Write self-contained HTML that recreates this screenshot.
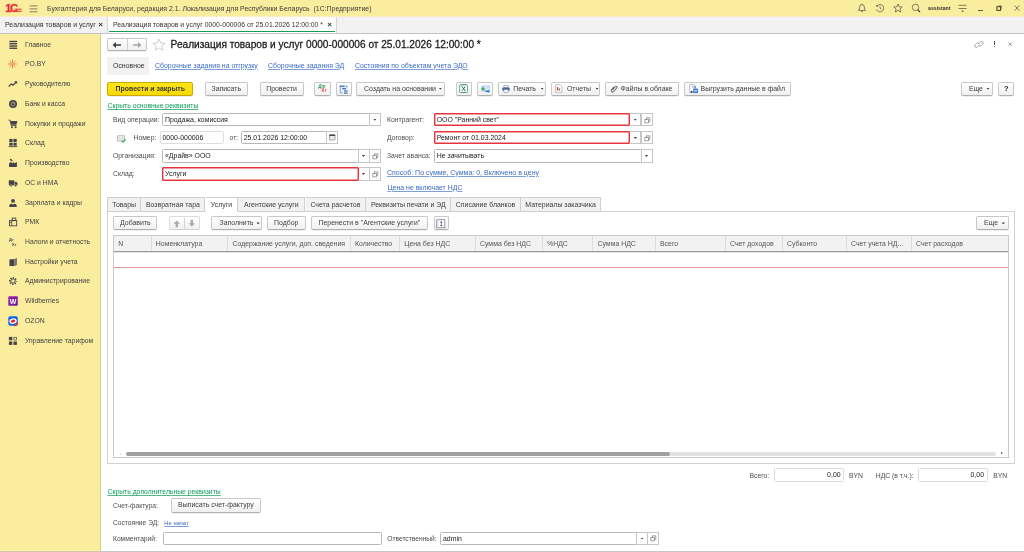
<!DOCTYPE html>
<html lang="ru"><head><meta charset="utf-8"><title>Реализация товаров и услуг</title>
<style>
html,body{margin:0;padding:0}
body{width:1024px;height:552px;overflow:hidden;background:#fff;position:relative;font-family:"Liberation Sans",sans-serif;font-size:6.93px;color:#3c3c3c;line-height:1}
.a{position:absolute;white-space:nowrap}
.t{position:absolute;white-space:nowrap;line-height:8px;height:8px}
.btn{color:#404040;position:absolute;box-sizing:border-box;border:1px solid #c8c8c8;border-bottom-color:#b0b0b0;border-radius:2px;background:linear-gradient(#ffffff,#f0f0f0);height:13.8px;line-height:12px;text-align:center;white-space:nowrap;box-shadow:0 .5px .5px rgba(0,0,0,.12)}
.fld{position:absolute;box-sizing:border-box;border:1px solid #b8b8b8;border-radius:1.5px;background:#fff;height:13.4px;line-height:11.2px;padding-left:2px;white-space:nowrap;color:#222}
.red{border-radius:1px;border-color:#e6363c;box-shadow:inset 0 0 0 .45px #e6363c}
.sb{position:absolute;box-sizing:border-box;border:1px solid #c6c6c6;background:#fff;height:13.4px}
a{color:#3468c0;text-decoration:underline}
.lnk{color:#3a6cc4;text-decoration:underline;text-decoration-color:rgba(58,108,196,.65)}
.glnk{color:#109a5a;text-decoration:underline;text-decoration-color:rgba(16,154,90,.7);font-size:6.82px}
.lbl{color:#4d4d4d;font-size:6.8px}
.side .t{left:25px;color:#424242;font-size:6.82px}
.th{position:absolute;top:0;height:15px;border-left:1px solid #dcdcdc;box-sizing:border-box;padding-left:4px;line-height:15.6px;color:#555}
.tab{position:absolute;top:197px;height:15px;box-sizing:border-box;border:1px solid #cfcfcf;border-left:none;background:#f2f2f2;line-height:13.4px;text-align:center;color:#3c3c3c}
.dd{display:inline-block;width:3.3px;height:2px;background:#444;clip-path:polygon(0 0,100% 0,50% 100%);vertical-align:.9px;margin-left:2.6px}
.dd.c{position:absolute;left:50%;top:50%;margin:-.9px 0 0 -1.65px}
</style></head><body><div id="root" style="position:absolute;left:0;top:0;width:1024px;height:552px;will-change:transform">

<!-- top bar -->
<div class="a" style="left:0;top:0;width:1024px;height:16px;background:#fbed9e;border-bottom:1px solid #f7efc6"></div>
<div class="a" style="left:0;top:17px;width:1024px;height:16.7px;background:#f2f2f2;border-bottom:1px solid #c4c4c4;box-sizing:border-box"></div>
<div class="t" style="left:47px;top:4.5px;color:#3c3c3c">Бухгалтерия для Беларуси, редакция 2.1. Локализация для Республики Беларусь&nbsp; (1С:Предприятие)</div>
<div class="t" style="left:928px;top:4.3px;font-size:5.2px;font-weight:bold;color:#333">assistant</div>

<!-- top icons -->
<svg class="a" style="left:5px;top:3px" width="19" height="11" viewBox="0 0 19 11"><text x="0.3" y="9" font-family="Liberation Sans, sans-serif" font-size="11.2" font-weight="bold" fill="#e7323c" stroke="#e7323c" stroke-width=".35">1</text><text x="5.1" y="9" font-family="Liberation Sans, sans-serif" font-size="11.2" font-weight="bold" fill="#e7323c" stroke="#e7323c" stroke-width=".35">С</text><path d="M9.5 6.15H16.8M10.5 8.3H16.8" stroke="#e7323c" stroke-width=".95"/></svg>
<svg class="a" style="left:28.5px;top:4.5px" width="9" height="8" viewBox="0 0 9 8"><path d="M0.6 0.9H8.4M0.6 3.9H8.4M0.6 6.8H8.4" stroke="#77735f" stroke-width=".9"/></svg>
<svg class="a" style="left:856.5px;top:3px" width="10" height="10" viewBox="0 0 10 10"><path d="M1.4 7.4Q2.6 6.4 2.6 4.2Q2.6 1.6 5 1.6Q7.4 1.6 7.4 4.2Q7.4 6.4 8.6 7.4Z" fill="none" stroke="#505050" stroke-width=".72" stroke-linejoin="round"/><path d="M4.2 8.6H5.8" stroke="#505050" stroke-width=".8"/><path d="M5 0.7V1.6" stroke="#505050" stroke-width=".72"/></svg>
<svg class="a" style="left:875px;top:3px" width="10" height="10" viewBox="0 0 10 10"><path d="M1.9 3.2A3.7 3.7 0 1 1 1.5 6.3" fill="none" stroke="#505050" stroke-width=".72"/><path d="M0.7 2.2L2.1 3.9L3.4 2.4Z" fill="#4a4a4a"/><path d="M5 2.8V5.2L6.6 6.3" fill="none" stroke="#505050" stroke-width=".72"/></svg>
<svg class="a" style="left:893px;top:3px" width="10" height="10" viewBox="0 0 10 10"><path d="M5 1L6.2 3.8L9.2 4L6.9 6L7.6 9L5 7.4L2.4 9L3.1 6L0.8 4L3.8 3.8Z" fill="none" stroke="#505050" stroke-width=".72" stroke-linejoin="round"/></svg>
<svg class="a" style="left:911px;top:3px" width="10" height="10" viewBox="0 0 10 10"><circle cx="4.5" cy="4.4" r="3.2" fill="none" stroke="#505050" stroke-width=".72"/><path d="M6.8 6.8L9 9" stroke="#333" stroke-width="1.1"/></svg>
<svg class="a" style="left:957.5px;top:4px" width="9" height="9" viewBox="0 0 9 9"><path d="M0.6 1.3H8.5M0.6 4.5H8.5" stroke="#605c48" stroke-width=".8"/><path d="M3.2 6.7H6L4.6 7.9Z" fill="#3a3528"/></svg>
<div class="a" style="left:978px;top:9.8px;width:5px;height:.8px;background:#605c48"></div>
<svg class="a" style="left:995.8px;top:5px" width="6" height="6" viewBox="0 0 6 6"><rect x="0.9" y="1.7" width="3.7" height="3.7" fill="none" stroke="#45402e" stroke-width="1"/><path d="M2.4 1.4V0.9H5.3V3.6H4.8" fill="none" stroke="#45402e" stroke-width=".6"/></svg>
<svg class="a" style="left:1013.6px;top:5px" width="6" height="6" viewBox="0 0 6 6"><path d="M0.6 0.4L5.3 5.7M5.3 0.4L0.6 5.7" stroke="#605c48" stroke-width=".75"/></svg>
<!-- content header right icons -->
<svg class="a" style="left:973.5px;top:39.5px" width="10" height="9" viewBox="0 0 10 9"><g fill="none" stroke="#8a8a8a" stroke-width=".75" stroke-linecap="round"><path d="M4.6 5.6L3.5 6.9A1.55 1.55 0 0 1 1.2 4.8L2.6 3.3A1.55 1.55 0 0 1 4.9 3.4"/><path d="M5.2 3.3L6.3 2A1.55 1.55 0 0 1 8.7 4.1L7.3 5.6A1.55 1.55 0 0 1 5 5.5"/></g></svg>
<div class="a" style="left:993.6px;top:41px;width:1px;height:3.6px;background:#555"></div>
<div class="a" style="left:993.6px;top:45.6px;width:1px;height:1.1px;background:#555"></div>
<svg class="a" style="left:1008px;top:42px" width="4.4" height="4.4" viewBox="0 0 5 5"><path d="M0.6 0.6L4.4 4.4M4.4 0.6L0.6 4.4" stroke="#777" stroke-width=".9"/></svg>

<!-- window tabs -->
<div class="t" style="left:5px;top:21px;color:#333">Реализация товаров и услуг</div>
<div class="t" style="left:98.2px;top:20.6px;color:#333;font-weight:bold;font-size:8px">×</div>
<div class="a" style="left:106.5px;top:17px;width:230.5px;height:16px;background:#fff;border-left:1px solid #d5d5d5;border-right:1px solid #d5d5d5;box-sizing:border-box"></div>
<div class="a" style="left:109px;top:30.7px;width:226px;height:1.3px;background:#169d53"></div>
<div class="t" style="left:113px;top:21px;color:#333;font-size:6.85px">Реализация товаров и услуг 0000-000006 от 25.01.2026 12:00:00 *</div>
<div class="t" style="left:327.2px;top:20.6px;color:#333;font-weight:bold;font-size:8px">×</div>

<!-- sidebar -->
<div class="a side" style="left:0;top:34.2px;width:100.5px;height:518.5px;background:#fbed9e;border-right:1px solid #d9cd85;box-sizing:border-box">
<div class="t" style="top:6.50px">Главное</div>
<svg class="a ic" id="si0" style="left:8px;top:5.50px" width="10" height="10" viewBox="0 0 10 10"><g fill="#45434b"><rect x="1.4" y="0.8" width="7.7" height="1.4"/><rect x="1.4" y="3.05" width="7.7" height="1.4"/><rect x="1.4" y="5.3" width="7.7" height="1.4"/><rect x="1.4" y="7.55" width="7.7" height="1.4"/></g></svg>
<div class="t" style="top:26.23px">PO.BY</div>
<svg class="a ic" id="si1" style="left:8px;top:25.23px" width="10" height="10" viewBox="0 0 10 10"><g stroke="#de3d32" stroke-width=".62" stroke-linecap="round"><path d="M4.4 0.9V9.1M0.4 5H8.4M1.6 2.2L7.2 7.8M7.2 2.2L1.6 7.8"/></g><circle cx="4.4" cy="5" r="1" fill="#fbed9e"/><circle cx="4.4" cy="5" r=".55" fill="#de3d32"/></svg>
<div class="t" style="top:45.96px">Руководителю</div>
<svg class="a ic" id="si2" style="left:8px;top:44.96px" width="10" height="10" viewBox="0 0 10 10"><path d="M1 7.2L3.3 4.9L5 6.2L8 3.2" fill="none" stroke="#45434b" stroke-width="1.25" stroke-linejoin="round" stroke-linecap="round"/><path d="M6.2 2.2H9.1V5.1Z" fill="#45434b"/></svg>
<div class="t" style="top:65.69px">Банк и касса</div>
<svg class="a ic" id="si3" style="left:8px;top:64.69px" width="10" height="10" viewBox="0 0 10 10"><circle cx="5" cy="5" r="4" fill="#45434b"/><circle cx="5" cy="5" r="2" fill="none" stroke="#cfc48a" stroke-width=".65"/><path d="M5 5L6.5 3.5" stroke="#cfc48a" stroke-width=".65"/></svg>
<div class="t" style="top:85.42px">Покупки и продажи</div>
<svg class="a ic" id="si4" style="left:8px;top:84.42px" width="10" height="10" viewBox="0 0 10 10"><path d="M0.6 1.2H2.1L3.2 6.6H8.4" fill="none" stroke="#45434b" stroke-width=".9"/><path d="M2.5 2H9.4L8.4 5.8H3.3Z" fill="#45434b"/><circle cx="3.9" cy="8.2" r=".95" fill="#45434b"/><circle cx="7.7" cy="8.2" r=".95" fill="#45434b"/></svg>
<div class="t" style="top:105.15px">Склад</div>
<svg class="a ic" id="si5" style="left:8px;top:104.15px" width="10" height="10" viewBox="0 0 10 10"><g fill="#45434b"><rect x="1.3" y="0.9" width="3.3" height="3.2"/><rect x="5.4" y="0.9" width="3.3" height="3.2"/><rect x="1.3" y="4.8" width="3.3" height="2.9"/><rect x="5.4" y="4.8" width="3.3" height="2.9"/><rect x="0.7" y="8.2" width="8.6" height=".9"/></g></svg>
<div class="t" style="top:124.88px">Производство</div>
<svg class="a ic" id="si6" style="left:8px;top:123.88px" width="10" height="10" viewBox="0 0 10 10"><path d="M1.1 9V5.2L3.6 3.6V5.6L6.2 4V5.6L8.9 4V9Z" fill="#45434b"/><rect x="1.9" y="0.9" width="1.7" height="1.6" fill="#45434b"/><rect x="3.3" y="1.9" width="1.3" height="1.2" fill="#45434b"/></svg>
<div class="t" style="top:144.61px">ОС и НМА</div>
<svg class="a ic" id="si7" style="left:8px;top:143.61px" width="10" height="10" viewBox="0 0 10 10"><rect x="0.8" y="2.3" width="5.4" height="5" fill="#45434b"/><path d="M6.6 3.7H8.3L9.4 5.3V7.3H6.6Z" fill="#45434b"/><circle cx="2.9" cy="7.7" r="1.15" fill="#45434b" stroke="#fbed9e" stroke-width=".4"/><circle cx="7.6" cy="7.7" r="1.15" fill="#45434b" stroke="#fbed9e" stroke-width=".4"/></svg>
<div class="t" style="top:164.34px">Зарплата и кадры</div>
<svg class="a ic" id="si8" style="left:8px;top:163.34px" width="10" height="10" viewBox="0 0 10 10"><circle cx="5" cy="2.9" r="1.9" fill="#45434b"/><path d="M1.3 9V7.8Q1.3 5.9 3.4 5.7L5 6.6L6.6 5.7Q8.7 5.9 8.7 7.8V9Z" fill="#45434b"/></svg>
<div class="t" style="top:184.07px">РМК</div>
<svg class="a ic" id="si9" style="left:8px;top:183.07px" width="10" height="10" viewBox="0 0 10 10"><rect x="1.5" y="3.6" width="7.2" height="5.2" fill="none" stroke="#45434b" stroke-width=".9"/><rect x="4.2" y="1.1" width="3.6" height="2.5" fill="none" stroke="#45434b" stroke-width=".9"/><path d="M3.7 3.6V8.8M1.5 5.4H3.7" stroke="#45434b" stroke-width=".8"/></svg>
<div class="t" style="top:203.80px">Налоги и отчетность</div>
<svg class="a ic" id="si10" style="left:8px;top:202.80px" width="10" height="10" viewBox="0 0 10 10"><text x="0.9" y="4.2" font-family="Liberation Sans, sans-serif" font-size="3.9" font-weight="bold" fill="#45434b">Дт</text><text x="4.3" y="8.6" font-family="Liberation Sans, sans-serif" font-size="3.9" font-weight="bold" fill="#45434b">Кт</text></svg>
<div class="t" style="top:223.53px">Настройки учета</div>
<svg class="a ic" id="si11" style="left:8px;top:222.53px" width="10" height="10" viewBox="0 0 10 10"><path d="M1.4 2.4L6.6 1.9V8.9L1.4 9Z" fill="#45434b"/><path d="M7.1 1.8L8.9 0.9V7.7L7.1 8.9Z" fill="#6d6a70"/></svg>
<div class="t" style="top:243.26px">Администрирование</div>
<svg class="a ic" id="si12" style="left:8px;top:242.26px" width="10" height="10" viewBox="0 0 10 10"><circle cx="5" cy="5" r="3.25" fill="none" stroke="#45434b" stroke-width="1.5" stroke-dasharray="1.28 1.275" stroke-dashoffset=".64"/><circle cx="5" cy="5" r="2.2" fill="none" stroke="#45434b" stroke-width="1"/></svg>
<div class="t" style="top:262.99px">Wildberries</div>
<svg class="a ic" id="si13" style="left:8px;top:261.99px" width="10" height="10" viewBox="0 0 10 10"><defs><linearGradient id="wbg" x1="0" y1="0" x2="1" y2="1"><stop offset="0" stop-color="#a020a8"/><stop offset="1" stop-color="#6a1a9a"/></linearGradient></defs><rect x="0.3" y="0.3" width="9.5" height="9.5" rx="1" fill="url(#wbg)"/><text x="5.05" y="7.6" text-anchor="middle" font-family="Liberation Sans, sans-serif" font-size="7" font-weight="bold" fill="#fff">W</text></svg>
<div class="t" style="top:282.72px">OZON</div>
<svg class="a ic" id="si14" style="left:8px;top:281.72px" width="10" height="10" viewBox="0 0 10 10"><rect x="0.3" y="0.3" width="9.5" height="9.5" rx="2" fill="#1266e6"/><path d="M9.8 5.5V7.8A2 2 0 0 1 7.8 9.8H4.5Q8 9 9.8 5.5Z" fill="#e6273a"/><ellipse cx="5" cy="5.1" rx="3.7" ry="2.7" fill="#fff" transform="rotate(-12 5 5)"/><ellipse cx="5" cy="5.1" rx="2.4" ry="1.45" fill="#e6273a" transform="rotate(-12 5 5)"/></svg>
<div class="t" style="top:302.45px">Управление тарифом</div>
<svg class="a ic" id="si15" style="left:8px;top:301.45px" width="10" height="10" viewBox="0 0 10 10"><g fill="#45434b"><rect x="0.9" y="0.9" width="3.4" height="3.4"/><rect x="0.9" y="5.5" width="3.4" height="3.4"/><rect x="5.5" y="5.5" width="3.4" height="3.4"/></g><rect x="5.9" y="1.3" width="2.7" height="2.7" fill="none" stroke="#45434b" stroke-width=".7"/></svg>
</div>

<!--MAIN-->
<!-- header row -->
<div class="btn" style="left:107px;top:38px;width:39.5px;height:13px"></div>
<div class="a" style="left:127px;top:39px;width:1px;height:11px;background:#cfcfcf"></div>
<svg class="a" style="left:112px;top:41px" width="10" height="8" viewBox="0 0 10 8"><path d="M0.6 4 L4 1 V3.2 H9 V4.8 H4 V7 Z" fill="#3a3a3a"/></svg>
<svg class="a" style="left:132px;top:41px" width="10" height="8" viewBox="0 0 10 8"><path d="M9.4 4 L6 1 V3.2 H1 V4.8 H6 V7 Z" fill="#a5a5a5"/></svg>
<svg class="a" style="left:152px;top:37.5px" width="14" height="13" viewBox="0 0 14 13"><path d="M7 1 L8.7 5 L13 5.3 L9.7 8.1 L10.8 12.2 L7 9.9 L3.2 12.2 L4.3 8.1 L1 5.3 L5.3 5 Z" fill="none" stroke="#c4c4c4" stroke-width=".8" stroke-linejoin="round"/></svg>
<div class="a" style="left:170.6px;top:38.8px;font-size:10.12px;line-height:11px;color:#1c1c1c;-webkit-text-stroke:.28px #1c1c1c">Реализация товаров и услуг 0000-000006 от 25.01.2026 12:00:00 *</div>

<!-- nav tabs -->
<div class="a" style="left:107px;top:57px;width:42px;height:17.5px;background:#f2f2f2;border-radius:1.5px"></div>
<div class="t" style="left:113px;top:61.5px;color:#333">Основное</div>
<div class="t lnk" style="left:155px;top:61.5px">Сборочные задания на отгрузку</div>
<div class="t lnk" style="left:268px;top:61.5px">Сборочные задания ЭД</div>
<div class="t lnk" style="left:355px;top:61.5px">Состояния по объектам учета ЭДО</div>

<!-- command bar -->
<div class="btn" style="left:107.3px;top:81.6px;height:14.1px;line-height:12.3px;width:86px;background:linear-gradient(#ffe61a,#f7d800);border-color:#c9a800;font-weight:bold;color:#3a3a3a">Провести и закрыть</div>
<div class="btn" style="left:204.5px;top:81.6px;height:14.1px;line-height:12.3px;width:43.5px">Записать</div>
<div class="btn" style="left:259.5px;top:81.6px;height:14.1px;line-height:12.3px;width:44px">Провести</div>
<div class="btn" style="left:314.3px;top:81.6px;height:14.1px;line-height:12.3px;width:16.3px"></div>
<div class="btn" style="left:335.7px;top:81.6px;height:14.1px;line-height:12.3px;width:16.3px"></div>
<div class="btn" style="left:356.3px;top:81.6px;height:14.1px;line-height:12.3px;width:89px;text-align:left;padding-left:6.8px">Создать на основании<span class="dd" style="margin-left:2.8px"></span></div>
<div class="btn" style="left:456.3px;top:81.6px;height:14.1px;line-height:12.3px;width:16px"></div>
<div class="btn" style="left:477px;top:81.6px;height:14.1px;line-height:12.3px;width:15.7px"></div>
<div class="btn" style="left:497.5px;top:81.6px;height:14.1px;line-height:12.3px;width:48.3px;text-align:left;padding-left:14.8px">Печать <span class="dd"></span></div>
<div class="btn" style="left:551.3px;top:81.6px;height:14.1px;line-height:12.3px;width:48.3px;text-align:left;padding-left:14.7px">Отчеты <span class="dd"></span></div>
<div class="btn" style="left:605.3px;top:81.6px;height:14.1px;line-height:12.3px;width:73.7px;text-align:left;padding-left:14.3px">Файлы в облаке</div>
<div class="btn" style="left:684.3px;top:81.6px;height:14.1px;line-height:12.3px;width:106.5px;text-align:left;padding-left:15.3px">Выгрузить данные в файл</div>
<div class="btn" style="left:961.3px;top:81.6px;height:14.1px;line-height:12.3px;width:32.2px;text-align:left;padding-left:6.6px">Еще<span class="dd" style="margin-left:3.4px"></span></div>
<div class="btn" style="left:998.3px;top:81.6px;height:14.1px;line-height:12.3px;width:16.2px;font-size:7.5px;font-weight:bold;color:#222">?</div>

<!-- form -->
<div class="t glnk" style="left:107.5px;top:102px">Скрыть основные реквизиты</div>

<div class="t lbl" style="left:113px;top:115.5px">Вид операции:</div>
<div class="fld" style="left:162px;top:113px;width:207.5px">Продажа, комиссия</div>
<div class="sb" style="left:368.5px;top:113px;width:12.8px"><span class="dd c"></span></div>

<div class="t lbl" style="left:133.5px;top:133.7px">Номер:</div>
<div class="fld" style="left:159.5px;top:131.1px;width:64.5px;border-color:#dedede;border-radius:2px">0000-000006</div>
<div class="t lbl" style="left:229.5px;top:133.7px">от:</div>
<div class="fld" style="left:240.7px;top:131.1px;width:86px">25.01.2026 12:00:00</div>
<div class="sb" style="left:325.7px;top:131.1px;width:12px"></div>

<div class="t lbl" style="left:113px;top:151.8px">Организация:</div>
<div class="fld" style="left:162px;top:149.2px;width:196.5px">«Драйв» ООО</div>
<div class="sb" style="left:357.5px;top:149.2px;width:12px"><span class="dd c"></span></div>
<div class="sb" style="left:368.5px;top:149.2px;width:12.8px"></div>

<div class="t lbl" style="left:113px;top:170px">Склад:</div>
<div class="fld red" style="left:162px;top:167.3px;width:196.5px">Услуги</div>
<div class="sb" style="left:358.5px;top:167.3px;width:11px;border-left:none"><span class="dd c"></span></div>
<div class="sb" style="left:368.5px;top:167.3px;width:12.8px"></div>

<div class="t lbl" style="left:387px;top:115.5px">Контрагент:</div>
<div class="fld red" style="left:433.7px;top:113px;width:196.5px">ООО "Ранний свет"</div>
<div class="sb" style="left:630.2px;top:113px;width:11.3px;border-left:none"><span class="dd c"></span></div>
<div class="sb" style="left:640.5px;top:113px;width:12px"></div>

<div class="t lbl" style="left:387px;top:133.7px">Договор:</div>
<div class="fld red" style="left:433.7px;top:131.1px;width:196.5px">Ремонт от 01.03.2024</div>
<div class="sb" style="left:630.2px;top:131.1px;width:11.3px;border-left:none"><span class="dd c"></span></div>
<div class="sb" style="left:640.5px;top:131.1px;width:12px"></div>

<div class="t lbl" style="left:387px;top:151.8px">Зачет аванса:</div>
<div class="fld" style="left:433.7px;top:149.2px;width:208px">Не зачитывать</div>
<div class="sb" style="left:640.5px;top:149.2px;width:12px"><span class="dd c"></span></div>

<div class="t lnk" style="left:387px;top:168.8px;font-size:7px">Способ: По сумме, Сумма: 0, Включено в цену</div>
<div class="t lnk" style="left:387.5px;top:183.8px">Цена не включает НДС</div>

<!-- tab strip -->
<div class="a" style="left:107px;top:211px;width:907.8px;height:252.7px;border:1px solid #d2d2d2;box-sizing:border-box"></div>
<div class="tab" style="left:107px;width:34.3px;border-left:1px solid #cfcfcf">Товары</div>
<div class="tab" style="left:141.3px;width:64.2px">Возвратная тара</div>
<div class="tab" style="left:205.5px;width:32.8px;background:#fff;border-bottom-color:#fff">Услуги</div>
<div class="tab" style="left:238.3px;width:67.2px">Агентские услуги</div>
<div class="tab" style="left:305.5px;width:60.8px">Счета расчетов</div>
<div class="tab" style="left:366.3px;width:85px">Реквизиты печати и ЭД</div>
<div class="tab" style="left:451.3px;width:69.5px">Списание бланков</div>
<div class="tab" style="left:520.8px;width:80.5px">Материалы заказчика</div>

<!-- table toolbar -->
<div class="btn" style="left:113.3px;top:216.3px;width:44.2px;height:14.2px;line-height:12.4px">Добавить</div>
<div class="btn" style="left:168.7px;top:216.3px;width:31.8px;height:14.2px;line-height:12.4px;border-color:#dcdcdc;border-bottom-color:#d0d0d0;box-shadow:none"></div>
<div class="a" style="left:184.3px;top:217.7px;width:1px;height:11.5px;background:#d5d5d5"></div>
<div class="btn" style="left:211.3px;top:216.3px;width:50.5px;height:14.2px;line-height:12.4px;text-align:left;padding-left:7.2px">Заполнить<span class="dd" style="margin-left:3px"></span></div>
<div class="btn" style="left:267px;top:216.3px;width:38.5px;height:14.2px;line-height:12.4px">Подбор</div>
<div class="btn" style="left:310.7px;top:216.3px;width:117.3px;height:14.2px;line-height:12.4px">Перенести в "Агентские услуги"</div>
<div class="btn" style="left:433.7px;top:216.3px;width:15px;height:14.2px;line-height:12.4px"></div>
<div class="btn" style="left:976.2px;top:216.3px;width:32.5px;height:14.2px;line-height:12.4px;text-align:left;padding-left:6.8px">Еще<span class="dd" style="margin-left:3.6px"></span></div>

<!-- table -->
<div class="a" style="left:113.3px;top:235px;width:895.4px;height:223.4px;border:1px solid #c9c9c9;box-sizing:border-box;background:#fff"></div>
<div class="a" style="left:114.3px;top:236px;width:893.4px;height:16px;background:#f2f2f2;border-bottom:1px solid #9c9c9c;box-shadow:0 .5px 0 #c8c8c8;box-sizing:border-box">
<div class="th" style="left:0;border-left:none">N</div>
<div class="th" style="left:36.5px">Номенклатура</div>
<div class="th" style="left:113.2px">Содержание услуги, доп. сведения</div>
<div class="th" style="left:235.7px">Количество</div>
<div class="th" style="left:285px">Цена без НДС</div>
<div class="th" style="left:360.7px">Сумма без НДС</div>
<div class="th" style="left:427.7px">%НДС</div>
<div class="th" style="left:478.2px">Сумма НДС</div>
<div class="th" style="left:540.7px">Всего</div>
<div class="th" style="left:610.7px">Счет доходов</div>
<div class="th" style="left:667.7px">Субконто</div>
<div class="th" style="left:731.7px">Счет учета НД...</div>
<div class="th" style="left:796.7px">Счет расходов</div>
</div>
<div class="a" style="left:114.3px;top:267px;width:893.4px;height:1px;background:#e59a9a"></div>
<!-- scrollbar -->
<div class="a" style="left:126.3px;top:451.8px;width:869.3px;height:4.5px;border-radius:2.3px;background:#e2e2e2"></div>
<div class="a" style="left:126.3px;top:451.8px;width:543.5px;height:4.5px;border-radius:2.3px;background:#a0a0a0"></div>
<div class="a" style="left:119.5px;top:453px;width:0;height:0;border:1.2px solid transparent;border-right-color:#bbb;border-left:none"></div>
<div class="a" style="left:1001px;top:452.4px;width:0;height:0;border:1.7px solid transparent;border-left:2px solid #444;border-right:none"></div>

<!-- totals -->
<div class="t lbl" style="left:749.5px;top:471.6px">Всего:</div>
<div class="fld" style="left:773.6px;top:468.1px;height:13.7px;line-height:12px;width:70.5px;border-color:#dcdcdc;text-align:right;padding-right:2.5px">0,00</div>
<div class="t lbl" style="left:849px;top:471.6px">BYN</div>
<div class="t lbl" style="left:875.8px;top:471.6px">НДС (в т.ч.):</div>
<div class="fld" style="left:918px;top:468.1px;height:13.7px;line-height:12px;width:69.5px;border-color:#dcdcdc;text-align:right;padding-right:2.5px">0,00</div>
<div class="t lbl" style="left:993.3px;top:471.6px">BYN</div>

<!-- footer -->
<div class="t glnk" style="left:107.5px;top:488px">Скрыть дополнительные реквизиты</div>
<div class="t lbl" style="left:113px;top:502px;font-size:6.68px">Счет-фактура:</div>
<div class="btn" style="left:171.2px;top:498.2px;width:89.5px;height:14.6px;line-height:12.8px">Выписать счет-фактуру</div>
<div class="t lbl" style="left:113px;top:518.5px;font-size:6.68px">Состояние ЭД:</div>
<div class="t lnk" style="left:164.3px;top:518.7px;font-size:5.87px">Не начат</div>
<div class="t lbl" style="left:113px;top:534.8px;font-size:6.68px">Комментарий:</div>
<div class="fld" style="left:163px;top:531.8px;width:218.5px"></div>
<div class="t lbl" style="left:387.2px;top:534.8px;font-size:6.68px">Ответственный:</div>
<div class="fld" style="left:440px;top:531.8px;width:197px">admin</div>
<div class="sb" style="left:636px;top:531.8px;width:12px"><span class="dd c"></span></div>
<div class="sb" style="left:647px;top:531.8px;width:11.8px"></div>
<div class="a" style="left:0;top:551px;width:1024px;height:1px;background:#c6c6c6"></div><div class="a" style="left:0;top:551px;width:100px;height:1px;background:#d0c8a6"></div>
<!-- toolbar icons -->
<svg class="a" style="left:317px;top:84px" width="11" height="10" viewBox="0 0 11 10"><text x="1.2" y="4.3" font-family="Liberation Sans, sans-serif" font-size="4.5" font-weight="bold" font-style="italic" fill="#2f9a5c">Дт</text><text x="4.4" y="8.3" font-family="Liberation Sans, sans-serif" font-size="4.5" font-weight="bold" fill="#e8463c">Кт</text></svg>
<svg class="a" style="left:338.5px;top:84.5px" width="10" height="10" viewBox="0 0 10 10"><g fill="#4f7fc9"><rect x="0.6" y="0.5" width="5.2" height="1.6"/><rect x="3.2" y="3" width="4" height="1.5"/><rect x="5" y="5.3" width="3.6" height="1.4"/><rect x="5" y="7.4" width="3.6" height="1.4"/></g><path d="M1.3 2.1V7.9H3.6M7.6 0.6V2.6M6.6 1.6H8.6" fill="none" stroke="#4f7fc9" stroke-width=".7"/></svg>
<svg class="a" style="left:459.4px;top:84px" width="9.3" height="9.3" viewBox="0 0 10 10"><rect x="0.7" y="0.8" width="8.4" height="8.4" rx=".8" fill="#fff" stroke="#3fa060" stroke-width=".9"/><rect x="0.7" y="0.8" width="8.4" height="8.4" rx=".8" fill="none" stroke="#4a5aa0" stroke-width=".5" stroke-dasharray="6 10"/><path d="M3.1 2.8L6.7 7.3M6.7 2.8L3.1 7.3" stroke="#2d4f86" stroke-width="1"/><path d="M2.8 2.5L4.9 5M7 7.6L4.9 5" stroke="#2e8a50" stroke-width=".6"/></svg>
<svg class="a" style="left:480.5px;top:84.5px" width="10" height="9" viewBox="0 0 10 9"><rect x="1.2" y="0.9" width="7.2" height="5.2" rx=".6" fill="#e4eefb" stroke="#9cc0ee" stroke-width=".7"/><path d="M1.4 1.2L4.8 3.8L8.2 1.2" fill="none" stroke="#9cc0ee" stroke-width=".6"/><circle cx="2" cy="3.9" r="1.55" fill="#1e9a3c"/><circle cx="2" cy="3.9" r=".5" fill="#d8f5dd"/><path d="M4.2 5.6H6.8V4.4L9 6.3L6.8 8.2V7H4.2Z" fill="#2f7de0"/></svg>
<svg class="a" style="left:501.8px;top:84.8px" width="8" height="8" viewBox="0 0 9 9"><rect x="2.2" y="0.5" width="4.6" height="2.6" fill="#fff" stroke="#6a7fa6" stroke-width=".6"/><rect x="0.4" y="2.7" width="8.2" height="3.9" rx="1" fill="#4b6897"/><rect x="2.2" y="5.2" width="4.6" height="3.2" fill="#fff" stroke="#6a7fa6" stroke-width=".6"/></svg>
<svg class="a" style="left:555.3px;top:84.4px" width="8" height="9" viewBox="0 0 8 9"><path d="M0.6 0.6H5L7 2.6V8.4H0.6Z" fill="#fff" stroke="#a9a9b4" stroke-width=".7"/><rect x="1.9" y="3" width="1.3" height="3.6" fill="#e03a3a"/><rect x="3.7" y="4.4" width="1.5" height="2.2" fill="#35a865"/></svg>
<svg class="a" style="left:609.5px;top:85px" width="8" height="8" viewBox="0 0 8 8"><g transform="rotate(40 4 4)" fill="none" stroke="#666" stroke-width=".95"><path d="M2.6 2.2V6A1.4 1.4 0 0 0 5.4 6V1.2A.95 .95 0 0 0 3.5 1.2V5.6"/></g></svg>
<svg class="a" style="left:688.5px;top:84px" width="10" height="10" viewBox="0 0 10 10"><path d="M0.8 0.6H4.6L6.4 2.4V8.6H0.8Z" fill="#fff" stroke="#9aa0ac" stroke-width=".7"/><rect x="4.2" y="4.6" width="4.8" height="4.4" fill="#3b78d8"/><rect x="5" y="6.2" width="3.2" height="1.2" fill="#cfe0f8"/><path d="M3 3H6.6M5.4 1.9L6.8 3L5.4 4.1" fill="none" stroke="#3b78d8" stroke-width=".7"/><rect x="1.8" y="7" width="1.6" height="1.6" fill="#222"/></svg>
<!-- number icon -->
<svg class="a" style="left:116.5px;top:134.5px" width="10" height="9" viewBox="0 0 10 9"><rect x="0.6" y="0.8" width="6.6" height="5.2" fill="#f4f4f4" stroke="#ababab" stroke-width=".8"/><path d="M2.2 2V3.8H5.6V2" fill="none" stroke="#c4c4c4" stroke-width=".7"/><path d="M4.8 5.6L6.1 7L8.6 4.1" fill="none" stroke="#35b56a" stroke-width="1.3"/></svg>
<!-- calendar -->
<svg class="a" style="left:328.7px;top:134.2px" width="7" height="7" viewBox="0 0 7 7"><rect x="0.6" y="0.8" width="5.4" height="5.2" rx=".6" fill="#ededed" stroke="#5a5a5a" stroke-width=".55"/><rect x="0.4" y="0.5" width="5.8" height="1.6" rx=".4" fill="#4a4a4a"/></svg>
<!-- open icons -->
<svg class="a oi" style="left:372.3px;top:152.7px" width="7" height="7" viewBox="0 0 7 7"><rect x="2.6" y="0.9" width="3.3" height="3.3" fill="#fff" stroke="#686868" stroke-width=".6"/><rect x="0.9" y="2.5" width="3.4" height="3.4" fill="#fff" stroke="#686868" stroke-width=".6"/></svg>
<svg class="a oi" style="left:372.3px;top:170.8px" width="7" height="7" viewBox="0 0 7 7"><rect x="2.6" y="0.9" width="3.3" height="3.3" fill="#fff" stroke="#686868" stroke-width=".6"/><rect x="0.9" y="2.5" width="3.4" height="3.4" fill="#fff" stroke="#686868" stroke-width=".6"/></svg>
<svg class="a oi" style="left:643.8px;top:116.5px" width="7" height="7" viewBox="0 0 7 7"><rect x="2.6" y="0.9" width="3.3" height="3.3" fill="#fff" stroke="#686868" stroke-width=".6"/><rect x="0.9" y="2.5" width="3.4" height="3.4" fill="#fff" stroke="#686868" stroke-width=".6"/></svg>
<svg class="a oi" style="left:643.8px;top:134.6px" width="7" height="7" viewBox="0 0 7 7"><rect x="2.6" y="0.9" width="3.3" height="3.3" fill="#fff" stroke="#686868" stroke-width=".6"/><rect x="0.9" y="2.5" width="3.4" height="3.4" fill="#fff" stroke="#686868" stroke-width=".6"/></svg>
<svg class="a oi" style="left:650px;top:535.3px" width="7" height="7" viewBox="0 0 7 7"><rect x="2.6" y="0.9" width="3.3" height="3.3" fill="#fff" stroke="#686868" stroke-width=".6"/><rect x="0.9" y="2.5" width="3.4" height="3.4" fill="#fff" stroke="#686868" stroke-width=".6"/></svg>
<!-- table toolbar icons -->
<svg class="a" style="left:172.5px;top:219.5px" width="8" height="8" viewBox="0 0 8 8"><path d="M3.8 0.6L7 3.8H5V7.2H2.6V3.8H0.6Z" fill="#a9a9a9"/></svg>
<svg class="a" style="left:188.3px;top:219.3px" width="8" height="8" viewBox="0 0 8 8"><path d="M3.8 7.4L7 4.2H5V0.8H2.6V4.2H0.6Z" fill="#a9a9a9"/></svg>
<svg class="a" style="left:436px;top:218.5px" width="10" height="10" viewBox="0 0 10 10"><rect x="0.8" y="0.8" width="8" height="8" fill="#fff" stroke="#65607a" stroke-width=".65"/><rect x="1.1" y="1.1" width="1.3" height="7.4" fill="#dcdcdc"/><path d="M5.3 2.4V7.2" stroke="#3a4675" stroke-width=".6"/><path d="M4.2 3.7L5.3 2.1L6.4 3.7ZM4.2 5.9L5.3 7.5L6.4 5.9Z" fill="#3a4675"/></svg>
<!--ENDMAIN-->
</div></body></html>
